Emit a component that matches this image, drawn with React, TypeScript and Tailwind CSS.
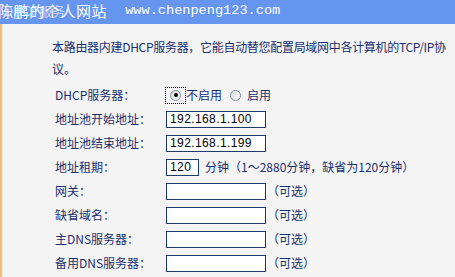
import React from 'react';

const labelText = 'w-[111px] shrink-0';

function Radio({ checked }: { checked?: boolean }) {
  return (
    <span className="flex h-[11px] w-[11px] items-center justify-center rounded-full border border-[#7d8ea8] bg-gradient-to-br from-[#d8d8d2] to-white">
      {checked && <span className="h-[4px] w-[4px] rounded-full bg-black" />}
    </span>
  );
}

function TextBox({ value = '', width = 'w-[100px]' }: { value?: string; width?: string }) {
  return (
    <input
      readOnly
      value={value}
      className={`${width} h-[17px] border border-[#1c3a6a] bg-white pl-[3px] font-['Liberation_Sans',Arial,sans-serif] text-[12px] leading-[15px] tracking-[0.4px] text-black outline-none`}
    />
  );
}

const optionalRows = ['网关：', '缺省域名：', '主DNS服务器：', '备用DNS服务器：'];

export default function App() {
  return (
    <div className="h-[277px] w-[455px] overflow-hidden bg-[#f4f4f4] font-['Noto_Sans_CJK_SC',sans-serif] text-[#1a2f6d]">
      {/* title bar with the site watermark over it */}
      <div className="relative h-6 bg-[#6595ef]">
        <span className="absolute left-[4px] top-[3px] text-[13px] leading-[16px] text-[#c9d6f2]">DHCP服务</span>
        <div className="absolute left-[-2px] top-0 flex h-[22px] items-center whitespace-nowrap text-white">
          <span className="text-[15px] leading-[18px] tracking-[0.6px]">陈鹏的个人网站</span>
          <span className="ml-[18px] font-['Liberation_Mono',monospace] text-[13.6px] leading-[18px]">www.chenpeng123.com</span>
        </div>
      </div>

      <div className="h-[253px] border-l-2 border-[#f0c078] pl-[50px] pt-3">
        <p className="text-[12px] leading-[22px]">
          <span className="whitespace-nowrap tracking-[-0.3px]">本路由器内建DHCP服务器，它能自动替您配置局域网中各计算机的TCP/IP协</span>
          <br />
          议。
        </p>

        <div className="mt-[3px] flex flex-col pl-[3px] text-[12px]">
          <div className="flex h-6 items-center">
            <span className={labelText}>DHCP服务器：</span>
            <span className="ml-[-1px] flex h-[17px] w-[21px] items-center justify-end border border-dotted border-black pr-[4px]">
              <Radio checked />
            </span>
            <span>不启用</span>
            <span className="ml-[8px] mr-[6px]">
              <Radio />
            </span>
            <span>启用</span>
          </div>

          <div className="flex h-6 items-center">
            <span className={labelText}>地址池开始地址：</span>
            <TextBox value="192.168.1.100" />
          </div>

          <div className="flex h-6 items-center">
            <span className={labelText}>地址池结束地址：</span>
            <TextBox value="192.168.1.199" />
          </div>

          <div className="flex h-6 items-center">
            <span className={labelText}>地址租期：</span>
            <TextBox value="120" width="w-[33px]" />
            <span className="ml-[6px] whitespace-nowrap">分钟（1～2880分钟，缺省为120分钟）</span>
          </div>

          {optionalRows.map((label) => (
            <div key={label} className="flex h-6 items-center">
              <span className={labelText}>{label}</span>
              <TextBox />
              <span className="ml-[1px]">（可选）</span>
            </div>
          ))}
        </div>
      </div>
    </div>
  );
}
